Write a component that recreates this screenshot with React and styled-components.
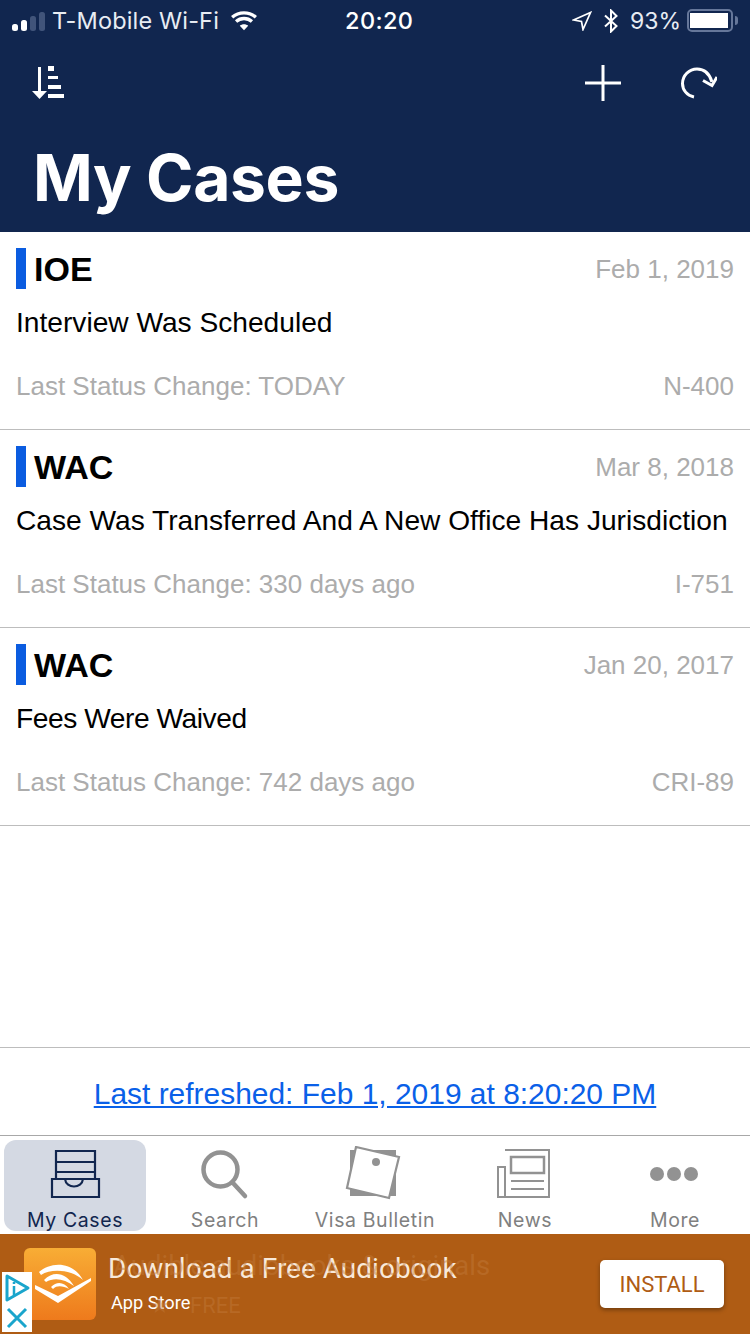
import React from "react";
import styled, { createGlobalStyle } from "styled-components";

const Global = createGlobalStyle`
  html, body { margin: 0; padding: 0; background: #fff; }
  #root { width: 750px; height: 1334px; overflow: hidden; }
  * { box-sizing: border-box; }
`;

const Page = styled.div`
  width: 750px; height: 1334px; display: flex; flex-direction: column;
  font-family: "Liberation Sans", Arial, sans-serif; background: #fff;
`;
const Header = styled.header`
  height: 232px; background: #11264f; color: #fff; display: flex; flex-direction: column;
`;
const StatusBar = styled.div`
  height: 40px; display: flex; align-items: center; padding: 1px 11px 0 12px;
  font-family: Inter, sans-serif; font-size: 23.5px; color: #e8ecf3;
`;
const StatusLeft = styled.div`
  flex: none; width: 333px; display: flex; align-items: center; gap: 7px;
`;
const Carrier = styled.span`letter-spacing: .15px;`;
const StatusTime = styled.div`
  font-weight: 500; font-size: 23.5px; color: #fff; letter-spacing: .4px;
`;
const StatusRight = styled.div`
  flex: 1; display: flex; align-items: center; justify-content: flex-end; gap: 11px; padding-right: 6px;
`;
const Percent = styled.span`font-size: 23px;`;
const Signal = styled.div`
  display: flex; align-items: flex-end; gap: 3.5px; height: 20px; width: 33px;
`;
const Bar = styled.i`
  display: block; width: 5.5px; border-radius: 2.5px; height: ${p => p.$h}px;
  background: ${p => (p.$on ? "#fff" : "#41547a")};
`;
const WifiIcon = styled.svg`width: 28px; height: 22px; margin-left: 4px; display: block;`;
const Battery = styled.div`
  width: 46px; height: 23px; border: 2px solid #66779a; border-radius: 5px; padding: 2px 1px; margin-left: -5px; position: relative;
  &::before { content: ""; display: block; height: 100%; width: 38px; background: #fff; }
  &::after { content: ""; position: absolute; right: -7px; top: 5px; width: 3px; height: 9px; background: #66779a; border-radius: 0 3px 3px 0; }
`;
const Toolbar = styled.div`
  height: 86px; display: flex; align-items: center; padding: 0 33px 0 32px;
`;
const ToolSpacer = styled.div`flex: 1;`;
const ToolGroup = styled.div`display: flex; align-items: center; gap: 60px;`;
const Title = styled.h1`
  margin: 14px 0 0; padding: 0 0 0 33px; font-family: Inter, sans-serif; font-weight: 700; font-size: 64.2px; line-height: 76px; letter-spacing: -.4px;
`;
const List = styled.main`flex: 1; display: flex; flex-direction: column;`;
const Row = styled.article`
  height: 198px; border-bottom: 1px solid #bdbdbd; padding: 16px 16px 0; display: flex; flex-direction: column;
`;
const TopLine = styled.div`display: flex; align-items: flex-start; justify-content: space-between; height: 41px; line-height: 43px;`;
const Office = styled.div`
  display: flex; align-items: flex-start; height: 41px; font-weight: 700; font-size: 34px; color: #000;
  &::before { content: ""; width: 10px; height: 41px; background: #0b5ce0; margin-right: 8px; }
`;
const Muted = styled.span`font-size: 26px; color: #acacac;`;
const Status = styled.div`
  font-size: 28.15px; line-height: 32px; color: #000; margin-top: 18px; white-space: nowrap;
  letter-spacing: ${p => p.$tracking}px;
`;
const BottomLine = styled.div`
  display: flex; justify-content: space-between; line-height: 32px; margin-top: 31px;
`;
const Refresh = styled.div`
  height: 89px; border-top: 1px solid #bdbdbd; border-bottom: 1px solid #a8a8a8; display: flex; align-items: center; justify-content: center; padding-top: 4px;
`;
const RefreshLink = styled.a`
  color: #0a60e8; text-decoration: underline; font-size: 29.95px;
`;
const Tabs = styled.nav`
  height: 98px; display: grid; grid-template-columns: repeat(5, 150px); position: relative;
`;
const Tab = styled.div`
  margin: 4px; border-radius: 12px; display: flex; flex-direction: column; align-items: center; justify-content: flex-start; position: relative;
  background: ${p => (p.$active ? "#d4d9e3" : "transparent")};
  color: ${p => (p.$active ? "#11264f" : "#808080")};
`;
const TabIcon = styled.svg`width: 64px; height: 64px; margin-top: 6px; display: block;`;
const TabLabel = styled.span`
  font-family: Inter, sans-serif; font-size: 19.5px; line-height: 22px; letter-spacing: .6px; margin-top: -1px; white-space: nowrap;
`;
const Ad = styled.aside`
  height: 100px; background: #af5c14; position: relative; display: flex; align-items: flex-start; padding: 14px 26px 0 24px; font-family: Roboto, sans-serif;
`;
const AdLogo = styled.svg`width: 72px; height: 72px; display: block; flex: none;`;
const AdText = styled.div`margin-left: 12px; flex: 1; display: flex; flex-direction: column; color: #f8e9da;`;
const AdHead = styled.div`font-size: 28px; line-height: 36px; margin-top: 3px;`;
const AdSub = styled.div`font-size: 18.2px; line-height: 22px; margin: 5px 0 0 3px; color: #fff;`;
const Ghost = styled.div`
  position: absolute; color: #c27a3a; opacity: .45; font-size: ${p => p.$size}px; left: ${p => p.$x}px; top: ${p => p.$y}px; white-space: nowrap;
`;
const Install = styled.button`
  width: 124px; height: 48px; margin-top: 12px; border: 0; border-radius: 5px; background: #fff; color: #af5c14; font-family: Roboto, sans-serif; font-size: 22px;
  box-shadow: 0 2px 4px rgba(0,0,0,.35); position: relative; padding: 0;
`;
const AdChoices = styled.svg`
  position: absolute; left: 2px; top: 38px; width: 30px; height: 60px; background: #fff; display: block;
`;

const Sort = () => (
  <svg width="34" height="36" viewBox="0 0 34 36" fill="#fff">
    <rect x="6" y="2" width="3" height="28" />
    <path d="M0 26h15l-7.5 8z" />
    <rect x="16" y="1" width="6" height="5" />
    <rect x="16" y="11" width="10" height="3" />
    <rect x="16" y="20" width="13" height="4" />
    <rect x="16" y="29" width="16" height="4" />
  </svg>
);

const rows = [
  { office: "IOE", date: "Feb 1, 2019", status: "Interview Was Scheduled", tracking: 0, change: "TODAY", form: "N-400" },
  { office: "WAC", date: "Mar 8, 2018", status: "Case Was Transferred And A New Office Has Jurisdiction", tracking: 0, change: "330 days ago", form: "I-751" },
  { office: "WAC", date: "Jan 20, 2017", status: "Fees Were Waived", tracking: -0.44, change: "742 days ago", form: "CRI-89" },
];

export default function App() {
  return (
    <Page>
      <Global />
      <Header>
        <StatusBar>
          <StatusLeft>
            <Signal>
              <Bar $on $h={7} /><Bar $on $h={11} /><Bar $h={15} /><Bar $h={19} />
            </Signal>
            <Carrier>T-Mobile Wi-Fi</Carrier>
            <WifiIcon viewBox="0 0 30 22">
              <path d="M15 21 10.5 16c2.6-2.2 6.4-2.2 9 0z" fill="#fff" />
              <path d="M6.5 11.5c4.8-4.2 12.2-4.2 17 0M2.3 7C9.5.7 20.5.7 27.7 7" fill="none" stroke="#fff" strokeWidth="3.6" />
            </WifiIcon>
          </StatusLeft>
          <StatusTime>20:20</StatusTime>
          <StatusRight>
            <svg width="20" height="20" viewBox="0 0 20 20" fill="none" stroke="#fff" strokeWidth="1.7">
              <path d="M1.5 9 18.5 1.5 11 18.5 9.5 10.5z" strokeLinejoin="miter" />
            </svg>
            <svg width="16" height="24" viewBox="0 0 16 24" fill="none" stroke="#fff" strokeWidth="2">
              <path d="M2 6.5 13.5 17 8 22.5V1.5L13.5 7 2 17.5" />
            </svg>
            <Percent>93%</Percent>
            <Battery />
          </StatusRight>
        </StatusBar>
        <Toolbar>
          <Sort />
          <ToolSpacer />
          <ToolGroup>
            <svg width="36" height="36" viewBox="0 0 36 36" fill="#fff">
              <rect x="16.5" y="0" width="3" height="36" /><rect x="0" y="16.5" width="36" height="3" />
            </svg>
            <svg width="36" height="32" viewBox="0 0 36 32" fill="none" stroke="#fff" strokeWidth="3">
              <path d="M13 30C6 28.5 1.5 23 1.5 16.5 1.5 8.5 8 2 16 2c7 0 12.5 4.5 15 13" />
              <path d="M22 13.5 31 18.5 36 10" />
            </svg>
          </ToolGroup>
        </Toolbar>
        <Title>My Cases</Title>
      </Header>
      <List>
        {rows.map((r, i) => (
          <Row key={i}>
            <TopLine>
              <Office>{r.office}</Office>
              <Muted>{r.date}</Muted>
            </TopLine>
            <Status $tracking={r.tracking}>{r.status}</Status>
            <BottomLine>
              <Muted>Last Status Change: {r.change}</Muted>
              <Muted>{r.form}</Muted>
            </BottomLine>
          </Row>
        ))}
      </List>
      <Refresh>
        <RefreshLink>Last refreshed: Feb 1, 2019 at 8:20:20 PM</RefreshLink>
      </Refresh>
      <Tabs>
        <Tab $active>
          <TabIcon viewBox="0 0 64 64" fill="none" stroke="#11264f" strokeWidth="2.2">
            <path d="M13 5h39v28H13zM13 16h39M13 26h39" />
            <path d="M9 33h47v18H9z" fill="#d4d9e3" />
            <path d="M22 33c1 10 17 10 18 0" />
          </TabIcon>
          <TabLabel>My Cases</TabLabel>
        </Tab>
        <Tab>
          <TabIcon viewBox="0 0 64 64" fill="none" stroke="#929292" strokeWidth="4.5" strokeLinecap="round">
            <circle cx="27.5" cy="23.5" r="17" />
            <path d="M40 37 52 50" />
          </TabIcon>
          <TabLabel>Search</TabLabel>
        </Tab>
        <Tab>
          <TabIcon viewBox="0 0 64 64">
            <rect x="7" y="4" width="46" height="46" fill="#929292" />
            <path d="M13 1 56 11 46 52 4 42z" fill="#fff" stroke="#929292" strokeWidth="2.2" />
            <circle cx="33" cy="16" r="4" fill="#929292" />
          </TabIcon>
          <TabLabel>Visa Bulletin</TabLabel>
        </Tab>
        <Tab>
          <TabIcon viewBox="0 0 64 64" fill="none" stroke="#929292" strokeWidth="2">
            <path d="M12 4h44v47H5V21h7v30" />
            <path d="M18 11h33v16H18z" strokeWidth="2.5" />
            <path d="M18 35h33M18 43h33" />
          </TabIcon>
          <TabLabel>News</TabLabel>
        </Tab>
        <Tab>
          <TabIcon viewBox="0 0 64 64" fill="#929292">
            <circle cx="14" cy="28" r="7" /><circle cx="31" cy="28" r="7" /><circle cx="48" cy="28" r="7" />
          </TabIcon>
          <TabLabel>More</TabLabel>
        </Tab>
      </Tabs>
      <Ad>
        <Ghost $size={27.5} $x={113} $y={15}>Audible audiobooks &amp; originals</Ghost>
        <Ghost $size={22} $x={150} $y={59}>★</Ghost>
        <Ghost $size={22} $x={190} $y={59}>FREE</Ghost>
        <AdLogo viewBox="0 0 72 72">
          <defs>
            <linearGradient id="adg" x1="0" y1="0" x2="0" y2="1">
              <stop offset="0" stopColor="#f8ad35" />
              <stop offset="1" stopColor="#ee7a1c" />
            </linearGradient>
          </defs>
          <rect width="72" height="72" rx="6" fill="url(#adg)" />
          <path d="M11 37 34 48 67 30V33L34 55 11 41z" fill="#fff" />
          <path d="M15 24C26 14 48 12 59 32 48 22 28 20 17 27z" fill="#fff" />
          <path d="M20 32C30 22 42 25 50 38 41 31 30 29 22 34z" fill="#fff" />
          <path d="M27 39C33 33 40 34 45 41 39 38 33 37 29 41z" fill="#fff" />
        </AdLogo>
        <AdText>
          <AdHead>Download a Free Audiobook</AdHead>
          <AdSub>App Store</AdSub>
        </AdText>
        <Install>INSTALL</Install>
        <AdChoices viewBox="0 0 30 60" fill="none" stroke="#1aa5cc" strokeWidth="3">
          <path d="M5 4 26 16 5 28z" strokeLinejoin="round" />
          <path d="M12 14v9M12 10v2" strokeWidth="2.5" />
          <path d="M6 37 24 55M24 37 6 55" />
        </AdChoices>
      </Ad>
    </Page>
  );
}
